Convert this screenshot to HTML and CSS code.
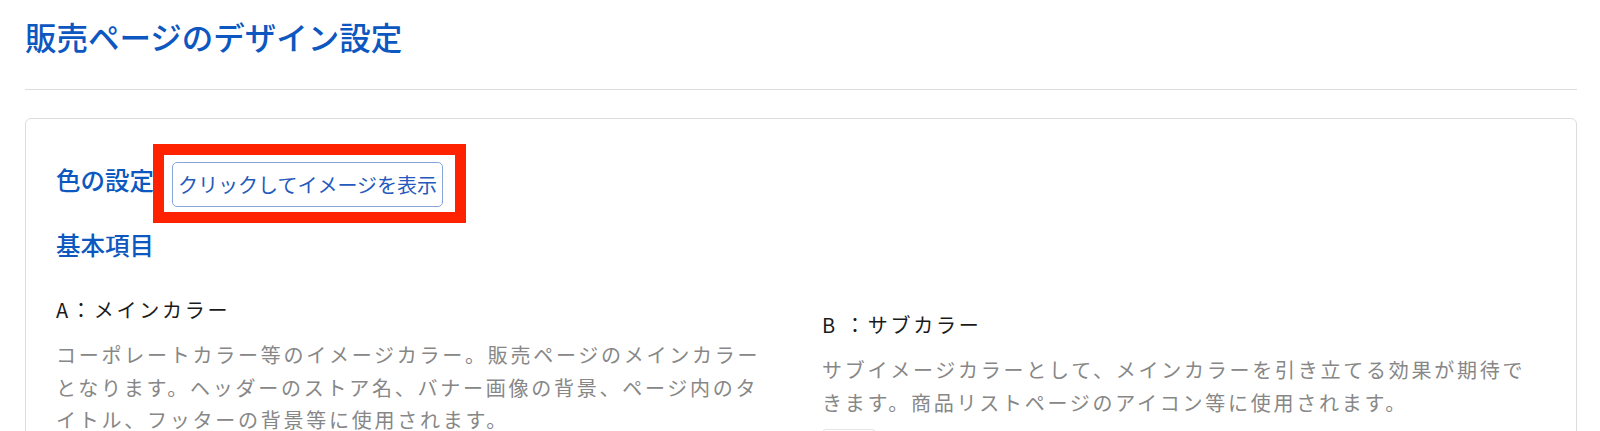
FILE: index.html
```html
<!DOCTYPE html>
<html lang="ja">
<head>
<meta charset="utf-8">
<title>販売ページのデザイン設定</title>
<link rel="stylesheet" href="styles.css">
</head>
<body>
<div class="page">
  <h1 class="page-title">販売ページのデザイン設定</h1>
  <hr class="divider">
  <section class="card">
    <div class="color-head">
      <h2 class="section-title">色の設定</h2>
      <span class="btn-wrap">
        <button class="btn-preview" type="button">クリックしてイメージを表示</button>
        <span class="highlight"></span>
      </span>
    </div>
    <h3 class="sub-title">基本項目</h3>
    <div class="color-grid">
      <div class="color-item">
        <div class="item-label">A：メインカラー</div>
        <p class="item-desc">コーポレートカラー等のイメージカラー。販売ページのメインカラーとなります。ヘッダーのストア名、バナー画像の背景、ページ内のタイトル、フッターの背景等に使用されます。</p>
        <div class="swatch"></div>
      </div>
      <div class="color-item color-item--offset">
        <div class="item-label">B ：サブカラー</div>
        <p class="item-desc">サブイメージカラーとして、メインカラーを引き立てる効果が期待できます。商品リストページのアイコン等に使用されます。</p>
        <div class="swatch"></div>
      </div>
    </div>
  </section>
</div>
</body>
</html>
```

FILE: styles.css
```css
* { box-sizing: border-box; }

html, body {
  margin: 0;
  padding: 0;
  background: #ffffff;
}

body {
  font-family: "Noto Sans CJK JP", "Noto Sans", sans-serif;
  color: #222222;
  overflow: hidden;
}

.page {
  padding: 0 23px 0 25px;
}

.page-title {
  margin: 0;
  padding-top: 16px;
  font-size: 31.5px;
  line-height: 40px;
  font-weight: 500;
  color: #0c57c0;
}

.divider {
  margin: 33px 0 0;
  border: 0;
  border-top: 1px solid #dddddd;
  height: 0;
}

.card {
  margin-top: 28px;
  border: 1px solid #dddddd;
  border-radius: 6px;
  padding: 43px 30px 40px 30px;
}

.color-head {
  display: flex;
  align-items: flex-start;
}

.section-title {
  margin: 0 18px 0 0;
  font-size: 24.5px;
  line-height: 36px;
  font-weight: 500;
  color: #0c57c0;
}

.btn-wrap {
  position: relative;
  display: inline-block;
}

.btn-preview {
  display: block;
  height: 45px;
  padding: 0 5px;
  border: 1px solid #88a5da;
  border-radius: 5px;
  background: #ffffff;
  font-family: "Noto Sans CJK JP", "Noto Sans", sans-serif;
  font-size: 20px;
  color: #2459bd;
  cursor: pointer;
}

.highlight {
  position: absolute;
  top: -18px;
  left: -19px;
  right: -23px;
  bottom: -16px;
  border: 11px solid #ff2200;
  pointer-events: none;
}

.sub-title {
  margin: 20px 0 0;
  font-size: 24.5px;
  line-height: 36px;
  font-weight: 500;
  color: #0c57c0;
}

.color-grid {
  display: grid;
  grid-template-columns: 716px 716px;
  column-gap: 50px;
  margin-top: 31px;
}

.color-item--offset {
  margin-top: 15px;
}

.item-label {
  font-size: 20px;
  line-height: 32px;
  letter-spacing: 2.75px;
  color: #1a1a1a;
}

.item-desc {
  margin: 13px 0 0;
  font-size: 20px;
  line-height: 32.5px;
  letter-spacing: 2.75px;
  color: #878787;
}

.swatch {
  margin-top: 10px;
  width: 54px;
  height: 40px;
  border: 1px solid #e4e4e4;
  border-radius: 4px;
  background: #ffffff;
}
```
